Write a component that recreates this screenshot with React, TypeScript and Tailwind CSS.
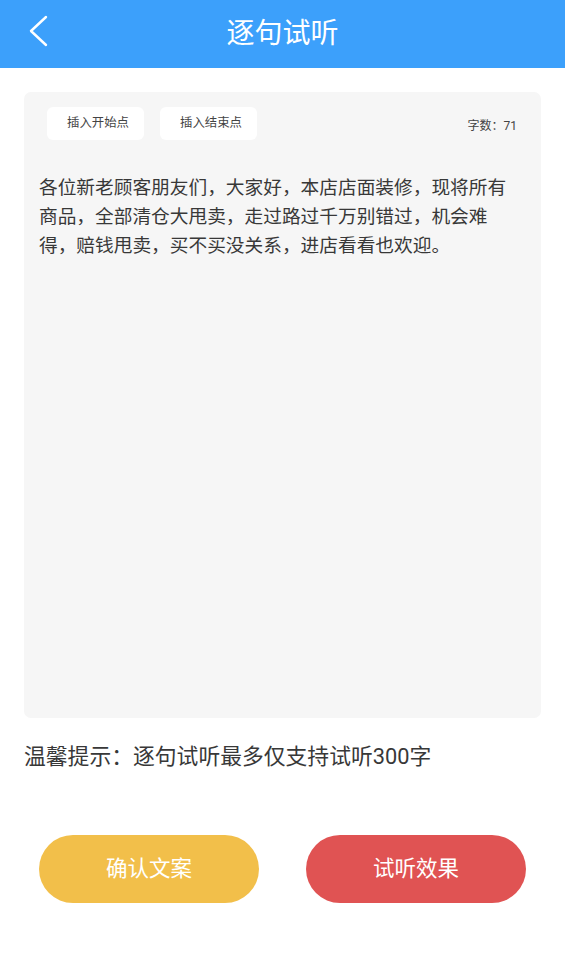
import React from "react";

const font = { fontFamily: "Roboto, 'Noto Sans CJK SC', sans-serif" };

export default function App() {
  return (
    <div className="w-[565px] h-[959px] bg-white relative overflow-hidden" style={font}>
      <div className="relative h-[68px] bg-[#3ca0fb] flex items-center justify-center">
        <svg className="absolute left-[26px] top-[14px]" width="24" height="34" viewBox="0 0 24 34" fill="none">
          <polyline points="20,3 5,17 20,31" stroke="white" strokeWidth="2.4" strokeLinecap="round" strokeLinejoin="round" />
        </svg>
        <span className="text-white text-[28px] leading-none">逐句试听</span>
      </div>
      <div className="px-[24px] pt-[24px]">
        <div className="h-[626px] rounded-[7px] bg-[#f6f6f6] pt-[15px]">
          <div className="flex items-center pl-[23px] pr-[24px]">
            <div className="h-[33px] w-[97px] rounded-[6px] bg-white flex items-center pl-[20px] text-[12.4px] text-[#444]">插入开始点</div>
            <div className="ml-[16px] h-[33px] w-[97px] rounded-[6px] bg-white flex items-center pl-[20px] text-[12.4px] text-[#444]">插入结束点</div>
            <div className="ml-auto pt-[4px] text-[12px] text-[#444]">字数：71</div>
          </div>
          <p className="mt-[34px] ml-[15px] w-[480px] text-[18.7px] leading-[29px] text-[#383838]">
            各位新老顾客朋友们，大家好，本店店面装修，现将所有商品，全部清仓大甩卖，走过路过千万别错过，机会难得，赔钱甩卖，买不买没关系，进店看看也欢迎。
          </p>
        </div>
        <p className="mt-[24px] text-[21.8px] leading-[30px] text-[#383838]">温馨提示：逐句试听最多仅支持试听300字</p>
      </div>
      <div className="mt-[63px] flex justify-between px-[39px]">
        <div className="w-[220px] h-[68px] rounded-full bg-[#f2bf4a] flex items-center justify-center text-white text-[21.5px]">确认文案</div>
        <div className="w-[220px] h-[68px] rounded-full bg-[#e05353] flex items-center justify-center text-white text-[21.5px]">试听效果</div>
      </div>
    </div>
  );
}
